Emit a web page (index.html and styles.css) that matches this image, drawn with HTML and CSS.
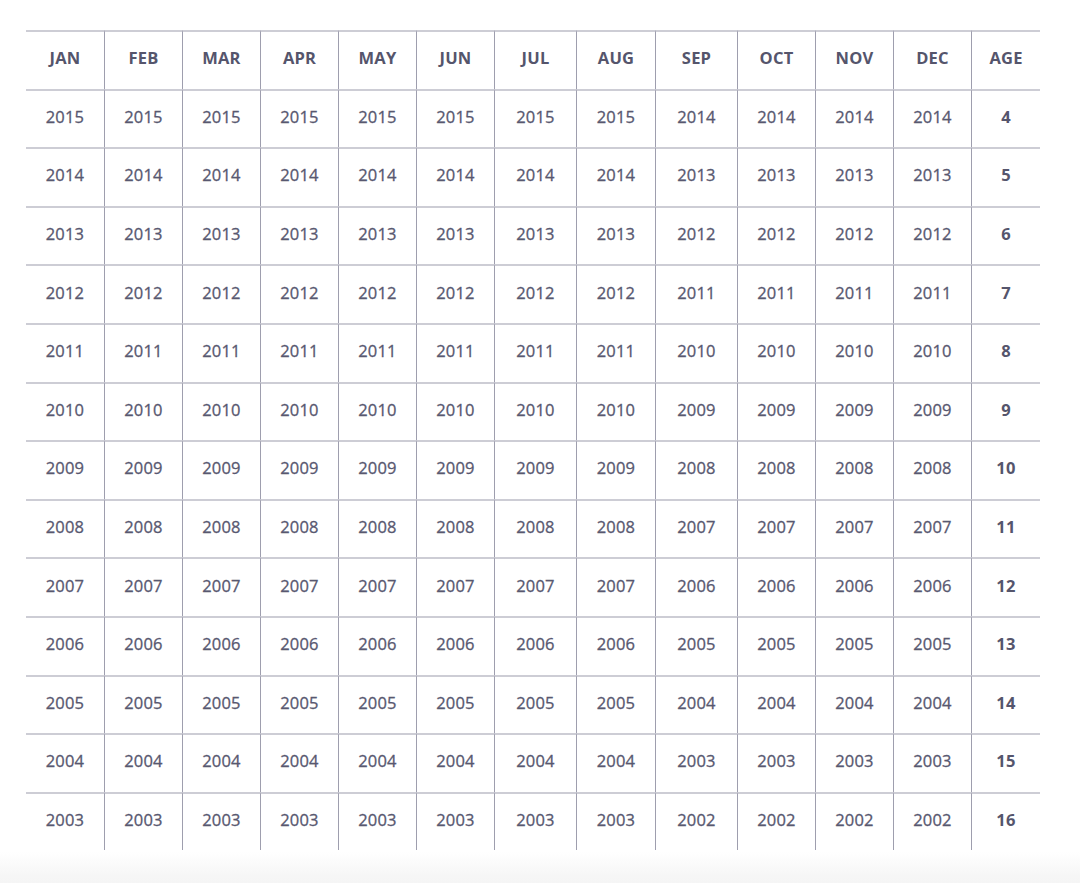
FILE: index.html
```html
<!DOCTYPE html>
<html>
<head>
<meta charset="utf-8">
<link rel="stylesheet" href="styles.css">
</head>
<body>
<div class="page">
  <div class="grid" id="grid">
    <div class="cell head">JAN</div><div class="cell head">FEB</div><div class="cell head">MAR</div><div class="cell head">APR</div><div class="cell head">MAY</div><div class="cell head">JUN</div><div class="cell head">JUL</div><div class="cell head">AUG</div><div class="cell head">SEP</div><div class="cell head">OCT</div><div class="cell head">NOV</div><div class="cell head">DEC</div><div class="cell head">AGE</div>
    <div class="cell">2015</div><div class="cell">2015</div><div class="cell">2015</div><div class="cell">2015</div><div class="cell">2015</div><div class="cell">2015</div><div class="cell">2015</div><div class="cell">2015</div><div class="cell">2014</div><div class="cell">2014</div><div class="cell">2014</div><div class="cell">2014</div><div class="cell age">4</div>
    <div class="cell">2014</div><div class="cell">2014</div><div class="cell">2014</div><div class="cell">2014</div><div class="cell">2014</div><div class="cell">2014</div><div class="cell">2014</div><div class="cell">2014</div><div class="cell">2013</div><div class="cell">2013</div><div class="cell">2013</div><div class="cell">2013</div><div class="cell age">5</div>
    <div class="cell">2013</div><div class="cell">2013</div><div class="cell">2013</div><div class="cell">2013</div><div class="cell">2013</div><div class="cell">2013</div><div class="cell">2013</div><div class="cell">2013</div><div class="cell">2012</div><div class="cell">2012</div><div class="cell">2012</div><div class="cell">2012</div><div class="cell age">6</div>
    <div class="cell">2012</div><div class="cell">2012</div><div class="cell">2012</div><div class="cell">2012</div><div class="cell">2012</div><div class="cell">2012</div><div class="cell">2012</div><div class="cell">2012</div><div class="cell">2011</div><div class="cell">2011</div><div class="cell">2011</div><div class="cell">2011</div><div class="cell age">7</div>
    <div class="cell">2011</div><div class="cell">2011</div><div class="cell">2011</div><div class="cell">2011</div><div class="cell">2011</div><div class="cell">2011</div><div class="cell">2011</div><div class="cell">2011</div><div class="cell">2010</div><div class="cell">2010</div><div class="cell">2010</div><div class="cell">2010</div><div class="cell age">8</div>
    <div class="cell">2010</div><div class="cell">2010</div><div class="cell">2010</div><div class="cell">2010</div><div class="cell">2010</div><div class="cell">2010</div><div class="cell">2010</div><div class="cell">2010</div><div class="cell">2009</div><div class="cell">2009</div><div class="cell">2009</div><div class="cell">2009</div><div class="cell age">9</div>
    <div class="cell">2009</div><div class="cell">2009</div><div class="cell">2009</div><div class="cell">2009</div><div class="cell">2009</div><div class="cell">2009</div><div class="cell">2009</div><div class="cell">2009</div><div class="cell">2008</div><div class="cell">2008</div><div class="cell">2008</div><div class="cell">2008</div><div class="cell age">10</div>
    <div class="cell">2008</div><div class="cell">2008</div><div class="cell">2008</div><div class="cell">2008</div><div class="cell">2008</div><div class="cell">2008</div><div class="cell">2008</div><div class="cell">2008</div><div class="cell">2007</div><div class="cell">2007</div><div class="cell">2007</div><div class="cell">2007</div><div class="cell age">11</div>
    <div class="cell">2007</div><div class="cell">2007</div><div class="cell">2007</div><div class="cell">2007</div><div class="cell">2007</div><div class="cell">2007</div><div class="cell">2007</div><div class="cell">2007</div><div class="cell">2006</div><div class="cell">2006</div><div class="cell">2006</div><div class="cell">2006</div><div class="cell age">12</div>
    <div class="cell">2006</div><div class="cell">2006</div><div class="cell">2006</div><div class="cell">2006</div><div class="cell">2006</div><div class="cell">2006</div><div class="cell">2006</div><div class="cell">2006</div><div class="cell">2005</div><div class="cell">2005</div><div class="cell">2005</div><div class="cell">2005</div><div class="cell age">13</div>
    <div class="cell">2005</div><div class="cell">2005</div><div class="cell">2005</div><div class="cell">2005</div><div class="cell">2005</div><div class="cell">2005</div><div class="cell">2005</div><div class="cell">2005</div><div class="cell">2004</div><div class="cell">2004</div><div class="cell">2004</div><div class="cell">2004</div><div class="cell age">14</div>
    <div class="cell">2004</div><div class="cell">2004</div><div class="cell">2004</div><div class="cell">2004</div><div class="cell">2004</div><div class="cell">2004</div><div class="cell">2004</div><div class="cell">2004</div><div class="cell">2003</div><div class="cell">2003</div><div class="cell">2003</div><div class="cell">2003</div><div class="cell age">15</div>
    <div class="cell">2003</div><div class="cell">2003</div><div class="cell">2003</div><div class="cell">2003</div><div class="cell">2003</div><div class="cell">2003</div><div class="cell">2003</div><div class="cell">2003</div><div class="cell">2002</div><div class="cell">2002</div><div class="cell">2002</div><div class="cell">2002</div><div class="cell age">16</div>
  </div>
  <div class="fade"></div>
</div>
</body>
</html>
```

FILE: styles.css
```css
html, body {
  margin: 0;
  padding: 0;
  background: #ffffff;
  height: 100%;
  overflow: hidden;
}

.page {
  padding-top: 30px;
  padding-left: 26px;
  font-family: "Open Sans", "Liberation Sans", sans-serif;
  color: #585870;
}

.grid {
  display: grid;
  width: 1014px;
  grid-template-columns: 78px 78px 78px 78px 78px 78px 82px 79px 82px 78px 78px 78px 69px;
  grid-auto-rows: 58.6px;
}

.cell {
  box-sizing: border-box;
  border-top: 2px solid #cdcdd5;
  border-left: 1px solid #9e9eae;
  display: flex;
  align-items: center;
  justify-content: center;
  padding-bottom: 5px;
  font-size: 16.5px;
  letter-spacing: 0.2px;
  -webkit-text-stroke: 0.3px #585870;
}

.cell:nth-child(13n+1) {
  border-left: none;
}

.head {
  font-weight: 700;
  color: #55556c;
  -webkit-text-stroke: 0;
}

.age {
  font-weight: 700;
  color: #55556c;
  -webkit-text-stroke: 0;
}

.fade {
  margin-left: -26px;
  height: 40px;
  margin-top: 2px;
  background: linear-gradient(to bottom, #ffffff 0%, #f6f6f6 60%, #f4f4f4 100%);
}
```
